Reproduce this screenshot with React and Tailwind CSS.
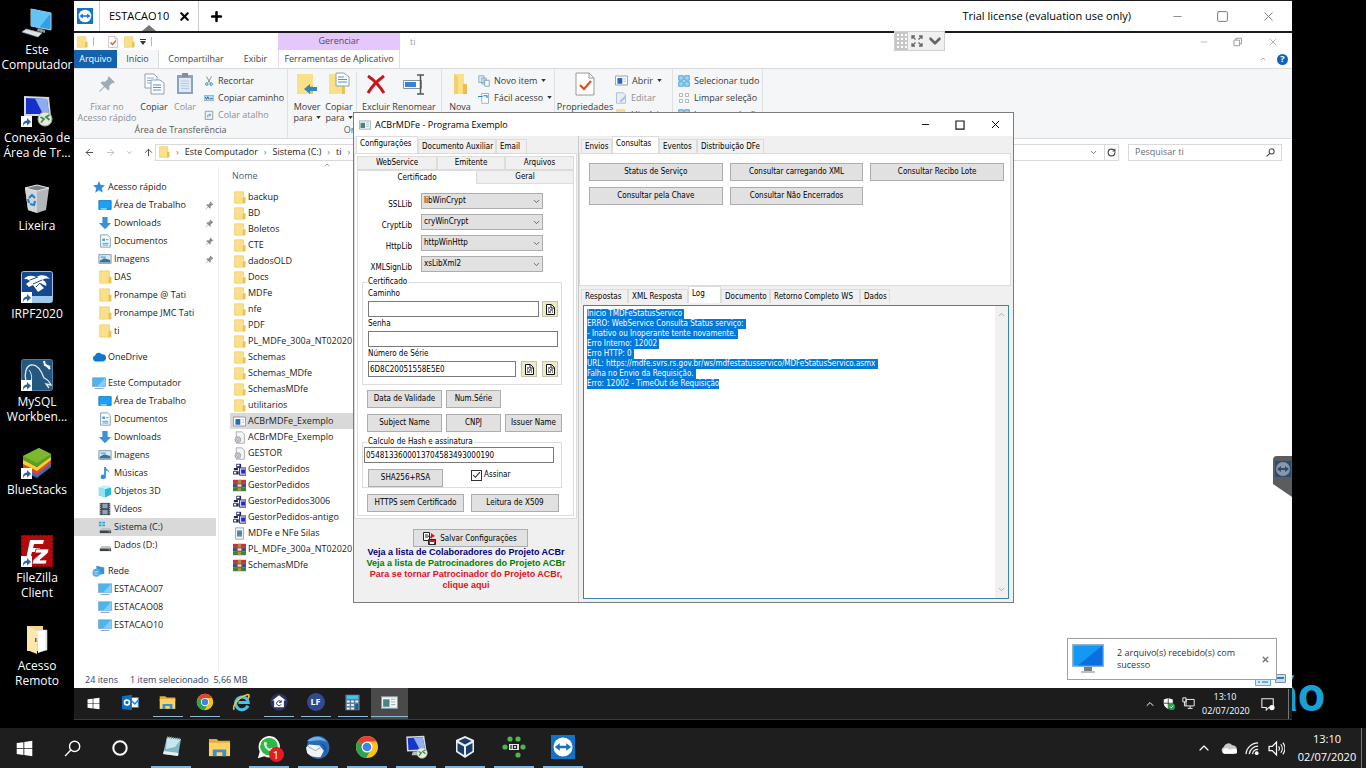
import React, { useEffect, useRef } from 'react';
import { ArrowLeft, ArrowRight, ArrowUp, ChevronDown, ChevronUp, Minus, Plus, RotateCw, Search, Square, X } from 'lucide-react';

const Svg = ({ w = 14, h, box = '0 0 16 16', children }) => (
    <svg width={w} height={h || w} viewBox={box} fill="none" className="shrink-0" aria-hidden="true">
        {children}
    </svg>
);

/* ---------- small icons ---------- */

const FolderIcon = ({ w = 13 }) => (
    <Svg w={w}>
        <path d="M2 1h11v14H2z" fill="#fbe08a" />
        <path d="M12 8h3v7h-3z" fill="#e9c255" />
        <path d="M2 1h11v7h2v7H2z" stroke="#e8c766" strokeWidth=".8" />
    </Svg>
);

const ScreenIcon = ({ w = 14 }) => (
    <Svg w={w}>
        <path d="M.5 2h15v10H.5z" fill="#4cb5ee" stroke="#7d9bb0" strokeWidth=".7" />
        <path d="M15 2v10H6z" fill="#7fd0fa" />
        <path d="M3 13.7h10v1H3z" fill="#7e9cb0" />
    </Svg>
);

const DesktopFolderIcon = () => (
    <Svg>
        <path d="M1 3h14v10H1z" fill="#1aa3f5" stroke="#0b76c4" />
        <path d="M3 12h7v1H3z" fill="#fff" />
    </Svg>
);

const DownloadIcon = () => (
    <Svg><path d="M5 1h6v7h4l-7 7-7-7h4z" fill="#3c8fd9" /></Svg>
);

const DocumentIcon = () => (
    <Svg>
        <path d="M3 1h8l3 3v11H3z" fill="#fff" stroke="#7b93a5" />
        <path d="M5 5h3v3H5zM5 10h7v1H5zM5 12h7v1H5zM9 6h3v1H9z" fill="#4b9dd0" />
    </Svg>
);

const ImageIcon = () => (
    <Svg>
        <path d="M1 3h14v10H1z" fill="#d7ecf9" stroke="#7d93a3" />
        <path d="M2 10l5-3 7 2v3H2z" fill="#3f6f93" />
        <path d="M3 5h6v2H3z" fill="#6ab7e8" />
    </Svg>
);

const MusicIcon = () => (
    <Svg>
        <path d="M7 1h2c0 3 4 3 4 7-1-2-2-2.600-4-3v7a3 2.500 0 1 1-2-2z" fill="#2b91dc" />
    </Svg>
);

const CubeIcon = () => (
    <Svg>
        <path d="M1 4l8-2 6 2v8l-6 3-8-2z" fill="#29b8d6" />
        <path d="M1 4l7 2v9l-7-2z" fill="#8fe5f3" />
        <path d="M1 4l8-2 6 2-7 2z" fill="#c6f3f9" />
    </Svg>
);

const VideoIcon = () => (
    <Svg>
        <path d="M2 1h12v14H2z" fill="#454b52" />
        <path d="M5 2h6v5H5zM5 9h6v5H5z" fill="#8fa5b5" />
        <path d="M3 2v12M13 2v12" stroke="#d5d9dc" strokeDasharray="1 1.500" />
    </Svg>
);

const DriveIcon = ({ system }) => (
    <Svg>
        {system && <path d="M1 2h3v2H1zM5 2h3v2H5zM1 5h3v2H1zM5 5h3v2H5z" fill="#26a5e0" />}
        <path d="M4 9h10l1 3H2z" fill="#bfc4c8" />
        <path d="M2 12h13v3H2z" fill="#3c4145" />
        <path d="M12 13h2v1h-2z" fill="#6fdc8c" />
    </Svg>
);

const StarIcon = () => (
    <Svg w={12}><path d="M8 0l2.300 5.200L16 5.800l-4.300 3.800L13 15.500 8 12.400 3 15.500l1.300-5.900L0 5.800l5.700-.6z" fill="#2f8edb" /></Svg>
);

const CloudIcon = () => (
    <Svg><path d="M4 13a3.500 3.500 0 0 1-.5-6.800 4.500 4.500 0 0 1 8-1.200A4 4 0 0 1 12.500 13z" fill="#0f78d0" /></Svg>
);

const NetworkIcon = () => (
    <Svg>
        <path d="M5 2l9 2v7l-9 2z" fill="#3b93d1" />
        <circle cx="5" cy="10" r="4.500" fill="#4faee4" />
        <path d="M2 9c2 1 3-1 5 0M3 12c2-1 3 0 4 0" stroke="#bfe5fa" />
    </Svg>
);

const PinIcon = ({ w = 9, h, color = '#8b8f94' }) => (
    <Svg w={w} h={h}>
        <path d="M9.500 1l5.500 5.500-1.500.8-.8-.2-2.700 2.700.2 2.700-1.200 1.200-3-3L1.500 15 1 14.500 5.300 10l-3-3 1.200-1.200 2.700.2L9 3.300l-.3-.8z" fill={color} />
    </Svg>
);

const AppIcon = ({ w = 12 }) => (
    <Svg w={w}>
        <path d="M.5 2.500h15v11H.5z" fill="#f5f8fa" stroke="#8b9aa5" />
        <path d="M2 5h6v7H2z" fill="#48857c" />
        <path d="M9.500 5h4M9.500 7.500h4M9.500 10h4" stroke="#a6b2ba" />
    </Svg>
);

const ExeIcon = () => (
    <Svg w={13}>
        <path d="M.5 2.500h15v11H.5z" fill="#fff" stroke="#7c8c9a" />
        <path d="M3 5h6v7H3z" fill="#2867b8" />
        <path d="M10.500 6h3M10.500 9h3" stroke="#9fb2c5" />
    </Svg>
);

const IniIcon = () => (
    <Svg w={13}>
        <path d="M4 1h7l3 3v11H4z" fill="#f4f5f6" stroke="#9ba1a7" />
        <circle cx="6" cy="10.500" r="3.500" fill="#d4d8db" stroke="#8d9398" />
        <circle cx="6" cy="10.500" r="1.200" fill="#fff" stroke="#8d9398" />
    </Svg>
);

const GestorIcon = () => (
    <Svg w={13}>
        <path d="M4 1h6v5H4z" fill="#23255e" />
        <path d="M5 2h3v2H5z" fill="#fff" />
        <path d="M1 6h5v3H1zM0 10h7v4H0z" fill="#23255e" />
        <path d="M1 11h3v2H1z" fill="#fff" />
        <path d="M8 6h8v9H8z" fill="#d8daf0" stroke="#191b66" />
        <path d="M10 8h5v5h-5z" fill="#1c2bd0" />
    </Svg>
);

const RarIcon = () => (
    <Svg w={13}>
        <path d="M0 1h16v5H0z" fill="#c4323b" />
        <path d="M0 6h16v4H0z" fill="#3b4fa0" />
        <path d="M0 10h16v5H0z" fill="#2f8a3f" />
        <path d="M6 1h4v14H6z" fill="#b98b4a" />
        <path d="M5 6h6v4H5z" fill="#efe0b0" stroke="#6b4a1c" />
    </Svg>
);

const PlainFileIcon = () => (
    <Svg w={13}>
        <path d="M3 1h10v14H3z" fill="#e9f1f7" stroke="#8a9fae" />
        <path d="M5 4h6v8H5z" fill="#7ba3bd" />
        <path d="M5 6h6M5 8h6M5 10h6" stroke="#3f6781" />
    </Svg>
);

const TeamViewerIcon = ({ w = 16 }) => (
    <Svg w={w} box="0 0 24 24">
        <path d="M0 0h24v24H0z" fill="#1273c8" />
        <circle cx="12" cy="12" r="9.500" fill="#fff" />
        <path d="M3.800 12l5-3.700v2.400h6.400V8.300l5 3.700-5 3.700v-2.400H8.800v2.400z" fill="#1273c8" />
    </Svg>
);

const ChromeIcon = ({ w }) => (
    <Svg w={w} box="0 0 24 24">
        <circle cx="12" cy="12" r="11" fill="#fbc116" />
        <path d="M12 12L2.500 6.500A11 11 0 0 1 21.500 6.500H12z" fill="#e04336" />
        <path d="M12 12L2.500 6.500A11 11 0 0 0 11 23l5-8.500z" fill="#31a350" />
        <circle cx="12" cy="12" r="5.500" fill="#fff" />
        <circle cx="12" cy="12" r="4.300" fill="#3f83ec" />
    </Svg>
);

const ExplorerIcon = ({ w }) => (
    <Svg w={w} box="0 0 24 24">
        <path d="M1 3h8l2 2h12v5H1z" fill="#e8a93a" />
        <path d="M1 7h22v14H1z" fill="#fcd364" />
        <path d="M5 21v-7h14v7h-4v-4H9v4z" fill="#3b8fd0" />
    </Svg>
);

const WindowsIcon = ({ w }) => (
    <Svg w={w} box="0 0 24 24">
        <path d="M1 4.300l9.500-1.300v8.500H1zM11.700 2.800L23 1.200v10.300H11.700zM1 12.600h9.500V21L1 19.700zM11.700 12.600H23v10.200l-11.300-1.600z" fill="#fff" />
    </Svg>
);

const RemoteDesktopIcon = ({ w }) => (
    <Svg w={w} box="0 0 32 32">
        <path d="M3 2l24-1 3 20-26 1z" fill="#d8dade" />
        <path d="M5 4l20-1 3 16-22 1z" fill="#1736c9" />
        <path d="M13 4l12-1 3 16-7 .4z" fill="#8fb1f0" />
        <path d="M12 22h8l3 5H10z" fill="#b9bcc0" />
        <circle cx="24" cy="24" r="7" fill="#e9ece6" stroke="#a9ada5" />
        <path d="M19.500 22l3.500 2-3 3.500M28.500 20l-3.500 2 3.500 3" stroke="#3e9142" strokeWidth="1.800" />
    </Svg>
);

/* ---------- desktop ---------- */

const Shortcut = () => (
    <g>
        <path d="M0 21h11v11H0z" fill="#fff" />
        <path d="M2 31c0-4 1-5 4-5.500V23l4 4-4 3.500V28c-2 0-3 1-4 3z" fill="#2a62ab" />
    </g>
);

const desktopItems = [
    { label: ['Este', 'Computador'], icon: (
        <>
            <path d="M10 2l20 4v17L10 19z" fill="#2f9fe6" stroke="#b9d5e6" />
            <path d="M10 2l20 4-12 15-8-2z" fill="#63c2f7" />
            <path d="M17 21l7 2v3l-8-2z" fill="#8a949b" />
            <path d="M5 22l16 4-4 4-16-5z" fill="#dfe3e6" stroke="#9aa2a8" strokeWidth=".7" />
        </>
    ) },
    { label: ['Conexão de', 'Área de Tr...'], icon: (
        <>
            <path d="M3 1l25 1 2 19H3z" fill="#d5d8dc" />
            <path d="M5 3l21 1 2 15H5z" fill="#1631c7" />
            <path d="M14 3.500l12 .5 2 15h-6z" fill="#8dadf0" />
            <circle cx="24" cy="24" r="7" fill="#e5e9e2" stroke="#a9ada5" />
            <path d="M19.500 22l3.500 2-3 3.500M28.500 20l-3.500 2 3.500 3" stroke="#3e9142" strokeWidth="1.800" />
            <Shortcut />
        </>
    ) },
    { label: ['Lixeira'], icon: (
        <>
            <path d="M4 5l12-3 12 3-3 22-9 3-9-3z" fill="#b4b7ba" />
            <path d="M4 5l12 3v22l-9-3z" fill="#d3d5d7" />
            <path d="M4 5l12-3 12 3-12 3z" fill="#7d8184" stroke="#e4e6e7" />
            <path d="M8 15l3-3 3 3M14 18l-1 4-4-1M8 20l-1-4" stroke="#1f84d6" strokeWidth="2.200" />
        </>
    ) },
    { label: ['IRPF2020'], icon: (
        <>
            <rect x=".5" y=".5" width="31" height="31" rx="2" fill="#164892" stroke="#9fc3e6" />
            <path d="M1 25h30v6H1z" fill="#9dcbea" />
            <path d="M3 8c3-4 8-4 12-2 5-3 11-2 14 2-4-1-6 0-8 1 4 1 5 4 4 6-3-1-4-3-7-3l5 5-6 4-5-7-4 2-3-3 4-3c-2-2-4-2-6-2z" fill="#fff" />
            <path d="M9 9l8-3M12 13l9-4M15 16l4-4" stroke="#164892" />
            <Shortcut />
        </>
    ) },
    { label: ['MySQL', 'Workben...'], icon: (
        <>
            <rect x=".5" y=".5" width="31" height="31" rx="2" fill="#25587f" stroke="#4c7fa6" />
            <path d="M5 22c-2-7 0-15 5-16 6-1 10 5 13 13 3 1 5 3 7 7l-5-1 3 4" stroke="#dfeaf2" strokeWidth="1.300" />
            <path d="M8 11c3 4 3 8 2 12" stroke="#dfeaf2" />
            <path d="M23 2l1 4 5 2M25 6l4 4" stroke="#fff" strokeWidth="2" />
            <Shortcut />
        </>
    ) },
    { label: ['BlueStacks'], icon: (
        <>
            <path d="M2 18l14 8 14-12v6L16 31 2 24z" fill="#2f6fb8" />
            <path d="M2 15l14 8 14-12v5L16 28 2 20z" fill="#e3432c" />
            <path d="M2 12l14 8L30 8v5L16 24 2 17z" fill="#f6cf33" />
            <path d="M2 9L18 1l12 6v3L16 20 2 13z" fill="#5f9d25" />
            <path d="M2 9L18 1l12 6-14 9z" fill="#7cb82f" />
            <Shortcut />
        </>
    ) },
    { label: ['FileZilla', 'Client'], icon: (
        <>
            <rect width="32" height="32" fill="#b3090c" />
            <rect x=".5" y=".5" width="31" height="31" stroke="#5c0305" strokeDasharray="2 2" />
            <path d="M9 5h14l-1 4h-9l-1 4h7l-1 4h-7l-2 7H5z" fill="#fff" />
            <path d="M15 14h13l-1 4-8 7h7l-1 4H11l1-4 8-7h-6z" fill="#fff" stroke="#b3090c" strokeWidth=".8" />
            <Shortcut />
        </>
    ) },
    { label: ['Acesso', 'Remoto'], icon: (
        <>
            <path d="M6 3h16v25H6z" fill="#f6d786" />
            <path d="M15 7h11v20l-8 2z" fill="#eef0f1" stroke="#c8cbcd" strokeWidth=".6" />
            <path d="M6 3l10 5v23L6 27z" fill="#fbe7ae" />
            <path d="M17 9l7-2v20l-7 3z" fill="#fff" />
            <path d="M14 15h1.500v4H14z" fill="#b4494a" />
        </>
    ) },
];

const DesktopIcons = () => (
    <aside className="flex w-[74px] shrink-0 flex-col pt-[7px]">
        {desktopItems.map((item) => (
            <a key={item.label[0]} href="#" className="flex h-[88px] flex-col items-center gap-[3px] text-center text-[12px] leading-[15px] text-white">
                <Svg w={32} box="0 0 32 32">{item.icon}</Svg>
                <span>
                    {item.label.map((line) => <span key={line} className="block whitespace-nowrap">{line}</span>)}
                </span>
            </a>
        ))}
    </aside>
);

/* ---------- explorer ---------- */

const Caret = () => (
    <Svg w={5} h={3} box="0 0 6 4"><path d="M0 0h6L3 4z" fill="#333" /></Svg>
);

const RibbonBig = ({ label, more, caret, muted, icon, width }) => (
    <button className={`flex flex-col items-center leading-[11px] ${width} ${muted ? 'text-[#8d9094]' : 'text-[#3b3b3b]'}`}>
        {icon}
        <span className="mt-[5px] whitespace-nowrap">{label}</span>
        {more && <span className="flex items-center gap-[3px] whitespace-nowrap">{more}{caret && <Caret />}</span>}
    </button>
);

const RibbonRow = ({ icon, label, caret, muted }) => (
    <button className={`flex h-[17px] items-center gap-1 whitespace-nowrap ${muted ? 'text-[#8d9094]' : 'text-[#3b3b3b]'}`}>
        {icon}
        <span>{label}</span>
        {caret && <Caret />}
    </button>
);

const RibbonGroup = ({ title, width, children }) => (
    <div className={`flex shrink-0 flex-col justify-between border-r border-[#e0e1e2] ${width}`}>
        <div className="flex items-start pt-[3px]">{children}</div>
        <div className="h-[14px] text-center leading-[12px] text-[#5a5a5a]">{title}</div>
    </div>
);

const PropertyIcon = ({ w = 12, h }) => (
    <Svg w={w} h={h} box="0 0 20 24">
        <path d="M1 1h13l5 5v17H1z" fill="#fff" stroke="#9a9a9a" />
        <path d="M14 1v5h5" stroke="#9a9a9a" />
        <path d="M5 13l4 4 7-8" stroke="#d9552b" strokeWidth="2.400" />
    </Svg>
);

const TitleBar = () => (
    <div className="flex h-[17px] items-stretch">
        <div className="flex w-[204px] items-center gap-[5px] pl-[2px]">
            <FolderIcon w={12} />
            <span className="h-[9px] w-px bg-[#b5b5b5]"></span>
            <span className="w-1"></span>
            <PropertyIcon w={10} h={12} />
            <FolderIcon w={12} />
            <Svg w={6} h={6} box="0 0 6 6"><path d="M0 0h6v1H0zM0 2h6L3 6z" fill="#333" /></Svg>
            <span className="h-[9px] w-px bg-[#b5b5b5]"></span>
        </div>
        <div className="w-[122px] bg-[#e5c8fb] text-center leading-[16px] text-[#57466a]">Gerenciar</div>
        <div className="flex-1 pl-[10px] leading-[17px] text-[#999]">ti</div>
        <div className="flex items-center gap-6 pr-[13px] text-[#999]">
            <Minus size={10} strokeWidth={1.5} />
            <Svg w={10}><path d="M1.500 5h9v9h-9zM4.500 5V2h9v9h-3" stroke="#888" strokeWidth="1.300" /></Svg>
            <X size={12} strokeWidth={1.5} />
        </div>
    </div>
);

const RibbonTabs = () => (
    <nav className="flex h-[18px] items-center whitespace-nowrap text-[#444]">
        <a href="#" className="h-full w-[43px] bg-[#1461ad] text-center leading-[18px] text-white">Arquivo</a>
        <a href="#" className="h-full w-[42px] border-r border-[#dadbdc] bg-[#f5f6f7] text-center leading-[18px]">Início</a>
        <a href="#" className="w-[74px] text-center">Compartilhar</a>
        <a href="#" className="w-[45px] text-center">Exibir</a>
        <a href="#" className="h-full w-[122px] border-x border-[#ead9f6] text-center leading-[18px]">Ferramentas de Aplicativo</a>
        <div className="flex flex-1 items-center justify-end gap-[10px] pr-1">
            <ChevronUp size={8} color="#888" />
            <span className="flex h-[11px] w-[11px] items-center justify-center rounded-full bg-[#0f64b5] text-[9px] font-bold text-white">?</span>
        </div>
    </nav>
);

const Ribbon = () => (
    <div className="flex h-[71px] border-y border-[#dadbdc] bg-[#f5f6f7]">
        <RibbonGroup title="Área de Transferência" width="w-[214px]">
            <RibbonBig width="w-[66px]" muted label="Fixar no" more="Acesso rápido" icon={<PinIcon w={18} h={24} color="#9eacb9" />} />
            <RibbonBig width="w-[28px]" label="Copiar" icon={
                <Svg w={22} h={24} box="0 0 22 24">
                    <path d="M2 2h9l3 3v11H2z" fill="#fff" stroke="#8aa0b2" />
                    <path d="M4 6h7M4 8.500h7M4 11h5" stroke="#7fb0da" />
                    <path d="M8 8h9l4 3v11H8z" fill="#fff" stroke="#8aa0b2" />
                    <path d="M10 13h8M10 15.500h8M10 18h8" stroke="#4f93cd" />
                </Svg>
            } />
            <RibbonBig width="w-[34px]" muted label="Colar" icon={
                <Svg w={20} h={24} box="0 0 20 24">
                    <path d="M2 3h16v19H2z" fill="#8ca3bd" />
                    <path d="M4 6h12v14H4z" fill="#dfe9f3" />
                    <path d="M6 9h8M6 11.500h8M6 14h8M6 16.500h8" stroke="#b6cbe0" />
                    <path d="M7 1h6v4H7z" fill="#7f8fa2" />
                </Svg>
            } />
            <div className="flex flex-col pl-[2px]">
                <RibbonRow label="Recortar" icon={
                    <Svg w={10}>
                        <path d="M4 1l6 10M12 1L6 11" stroke="#7b8ea0" strokeWidth="1.500" />
                        <circle cx="4.500" cy="13" r="2" stroke="#2a7fc4" strokeWidth="1.500" />
                        <circle cx="11.500" cy="13" r="2" stroke="#2a7fc4" strokeWidth="1.500" />
                    </Svg>
                } />
                <RibbonRow label="Copiar caminho" icon={
                    <Svg w={10}>
                        <path d="M0 4h16v8H0z" fill="#b6dbf2" stroke="#6f9fbe" />
                        <path d="M2 6l2 4 2-4 2 4M10 9h4" stroke="#1b4f7c" strokeWidth="1.300" />
                    </Svg>
                } />
                <RibbonRow muted label="Colar atalho" icon={
                    <Svg w={10}>
                        <path d="M2 2h12v13H2z" fill="#edf2f7" stroke="#8b9bae" strokeWidth="1.500" />
                        <path d="M6 12V8h4M8 6l3 2-3 2" stroke="#6f8fb3" strokeWidth="1.300" />
                    </Svg>
                } />
            </div>
        </RibbonGroup>
        <RibbonGroup title="Organizar" width="w-[154px]">
            <RibbonBig width="w-[38px]" label="Mover" more="para" caret icon={
                <Svg w={22} h={24} box="0 0 22 24">
                    <path d="M1 2h16v20H1z" fill="#fbe08a" />
                    <path d="M14 14h3v8h-3z" fill="#e9c255" />
                    <path d="M8 17l6-5v3h7v4h-7v3z" fill="#2f86c9" />
                </Svg>
            } />
            <RibbonBig width="w-[26px]" label="Copiar" more="para" caret icon={
                <Svg w={22} h={24} box="0 0 22 24">
                    <path d="M1 2h16v20H1z" fill="#fbe08a" />
                    <path d="M14 14h3v8h-3z" fill="#e9c255" />
                    <path d="M8 1h8l5 4v9H8z" fill="#fff" stroke="#8aa0b2" />
                    <path d="M10 5h6M10 7.500h9M10 10h9" stroke="#4f93cd" />
                </Svg>
            } />
            <span className="mx-1 h-[52px] w-px bg-[#e0e1e2]"></span>
            <RibbonBig width="w-[30px]" label="Excluir" icon={
                <Svg w={20} h={24} box="0 0 20 24">
                    <path d="M2 4c6 4 11 9 16 17M18 4C11 9 6 14 2 21" stroke="#cb1420" strokeWidth="3" />
                </Svg>
            } />
            <RibbonBig width="w-[46px]" label="Renomear" icon={
                <Svg w={22} h={24} box="0 0 22 24">
                    <path d="M.5 8.500h18v8H.5z" fill="#fff" stroke="#8a9299" />
                    <path d="M2 10h11v5H2z" fill="#2f86d2" />
                    <path d="M14 3h7M14 22h7M17.500 3v19" stroke="#555" strokeWidth="1.500" />
                </Svg>
            } />
        </RibbonGroup>
        <RibbonGroup title="" width="w-[113px]">
            <RibbonBig width="w-[36px]" label="Nova" icon={
                <Svg w={18} h={24} box="0 0 18 24">
                    <path d="M3 2h10v20H3z" fill="#fbdf89" />
                    <path d="M12 12h4v10h-4z" fill="#e7bf4f" />
                    <path d="M3 2l4 3v17H3z" fill="#f3d06c" />
                </Svg>
            } />
            <div className="flex flex-col">
                <RibbonRow label="Novo item" caret icon={
                    <Svg w={12}>
                        <path d="M1 1h7v9H1zM5 4h6v8H5z" fill="#dbeaf6" stroke="#7a9dbb" />
                        <path d="M9 7h6v8H9z" fill="#fff" stroke="#5f8aae" />
                    </Svg>
                } />
                <RibbonRow label="Fácil acesso" caret icon={
                    <Svg w={12}>
                        <path d="M5 2h9v13H5z" fill="#fff" stroke="#7a9dbb" />
                        <path d="M0 6h6M7 5h5v3" stroke="#2a7fc4" strokeWidth="1.600" />
                    </Svg>
                } />
            </div>
        </RibbonGroup>
        <RibbonGroup title="" width="w-[118px]">
            <RibbonBig width="w-[60px]" label="Propriedades" icon={<PropertyIcon w={20} h={24} />} />
            <div className="flex flex-col">
                <RibbonRow label="Abrir" caret icon={<ExeIcon />} />
                <RibbonRow muted label="Editar" icon={
                    <Svg w={12}>
                        <path d="M2 1h9l3 3v11H2z" fill="#e6eff7" stroke="#9bb2c7" />
                        <path d="M6 12l7-7 2 2-7 7z" fill="#a9c3dc" />
                    </Svg>
                } />
                <RibbonRow label="Histórico" icon={<FolderIcon w={12} />} />
            </div>
        </RibbonGroup>
        <RibbonGroup title="" width="w-[90px]">
            <div className="flex flex-col pl-[5px]">
                <RibbonRow label="Selecionar tudo" icon={
                    <Svg w={12}><path d="M1 1h6v6H1zM9 1h6v6H9zM1 9h6v6H1zM9 9h6v6H9z" fill="#9fd6f7" stroke="#2b8fce" /></Svg>
                } />
                <RibbonRow label="Limpar seleção" icon={
                    <Svg w={12}><path d="M2 2h4v4H2zM10 2h4v4h-4zM2 10h4v4H2zM10 10h4v4h-4z" fill="#fff" stroke="#9aa1a8" /></Svg>
                } />
                <RibbonRow label="Inverter seleção" icon={
                    <Svg w={12}><path d="M1 1h6v6H1zM9 1h6v6H9zM1 9h6v6H1z" fill="#9fd6f7" stroke="#2b8fce" /></Svg>
                } />
            </div>
        </RibbonGroup>
    </div>
);

const AddressBar = () => (
    <div className="flex h-[26px] items-center px-[10px]">
        <div className="flex w-[71px] items-center gap-[10px]">
            <ArrowLeft size={11} color="#444" />
            <ArrowRight size={11} color="#c0c0c0" />
            <ChevronDown size={7} color="#777" />
            <ArrowUp size={11} color="#444" />
        </div>
        <div className="flex h-[17px] flex-1 items-center gap-[6px] border border-[#d9d9d9] pl-[2px] text-[#222]">
            <FolderIcon w={12} />
            <span className="text-[#777]">›</span>
            <a href="#">Este Computador</a>
            <span className="text-[#777]">›</span>
            <a href="#">Sistema (C:)</a>
            <span className="text-[#777]">›</span>
            <a href="#">ti</a>
            <span className="text-[#777]">›</span>
            <span className="flex-1"></span>
            <ChevronDown size={9} color="#444" />
            <span className="flex h-full items-center border-l border-[#d9d9d9] px-[2px]"><RotateCw size={9} color="#444" strokeWidth={3} /></span>
        </div>
        <label className="ml-[9px] flex h-[17px] w-[154px] items-center border border-[#d9d9d9] px-[6px]">
            <input type="search" placeholder="Pesquisar ti" aria-label="Pesquisar ti" className="min-w-0 flex-1 outline-none placeholder:text-[#6d6d6d]" />
            <Svg w={9}>
                <circle cx="10" cy="6" r="4.500" stroke="#444" strokeWidth="1.800" />
                <path d="M7 9.500L1 15" stroke="#444" strokeWidth="2" />
            </Svg>
        </label>
    </div>
);

const navGroups = [
    [
        ['Acesso rápido', <StarIcon />, 'root'],
        ['Área de Trabalho', <DesktopFolderIcon />, 'pin'],
        ['Downloads', <DownloadIcon />, 'pin'],
        ['Documentos', <DocumentIcon />, 'pin'],
        ['Imagens', <ImageIcon />, 'pin'],
        ['DAS', <FolderIcon w={14} />],
        ['Pronampe @ Tati', <FolderIcon w={14} />],
        ['Pronampe JMC Tati', <FolderIcon w={14} />],
        ['ti', <FolderIcon w={14} />],
    ],
    [['OneDrive', <CloudIcon />, 'root']],
    [
        ['Este Computador', <ScreenIcon />, 'root'],
        ['Área de Trabalho', <DesktopFolderIcon />],
        ['Documentos', <DocumentIcon />],
        ['Downloads', <DownloadIcon />],
        ['Imagens', <ImageIcon />],
        ['Músicas', <MusicIcon />],
        ['Objetos 3D', <CubeIcon />],
        ['Vídeos', <VideoIcon />],
        ['Sistema (C:)', <DriveIcon system />, 'selected'],
        ['Dados (D:)', <DriveIcon />],
    ],
    [
        ['Rede', <NetworkIcon />, 'root'],
        ['ESTACAO07', <ScreenIcon />],
        ['ESTACAO08', <ScreenIcon />],
        ['ESTACAO10', <ScreenIcon />],
    ],
];

const NavTree = () => (
    <nav className="flex w-[145px] shrink-0 flex-col gap-2 border-r border-[#f0f0f0] pt-[12px] pr-[2px]">
        {navGroups.map((group, g) => (
            <ul key={g}>
                {group.map(([label, icon, kind]) => (
                    <li key={label}>
                        <a href="#" className={`flex h-[18px] items-center gap-[2px] pr-[2px] whitespace-nowrap ${kind === 'root' ? 'pl-[18px]' : 'pl-[24px]'} ${kind === 'selected' ? 'bg-[#d9d9d9]' : ''}`}>
                            <span className="flex w-[14px] justify-center">{icon}</span>
                            <span className="flex-1">{label}</span>
                            {kind === 'pin' && <PinIcon />}
                        </a>
                    </li>
                ))}
            </ul>
        ))}
    </nav>
);

const files = [
    ['backup', 'folder'], ['BD', 'folder'], ['Boletos', 'folder'], ['CTE', 'folder'],
    ['dadosOLD', 'folder'], ['Docs', 'folder'], ['MDFe', 'folder'], ['nfe', 'folder'],
    ['PDF', 'folder'], ['PL_MDFe_300a_NT02020 N', 'folder'], ['Schemas', 'folder'],
    ['Schemas_MDfe', 'folder'], ['SchemasMDfe', 'folder'], ['utilitarios', 'folder'],
    ['ACBrMDFe_Exemplo', 'exe'], ['ACBrMDFe_Exemplo', 'ini'], ['GESTOR', 'ini'],
    ['GestorPedidos', 'gestor'], ['GestorPedidos', 'rar'], ['GestorPedidos3006', 'gestor'],
    ['GestorPedidos-antigo', 'gestor'], ['MDFe e NFe Silas', 'file'],
    ['PL_MDFe_300a_NT02020 N', 'rar'], ['SchemasMDfe', 'rar'],
];

const fileIcons = {
    folder: <FolderIcon />,
    exe: <ExeIcon />,
    ini: <IniIcon />,
    gestor: <GestorIcon />,
    rar: <RarIcon />,
    file: <PlainFileIcon />,
};

const FileList = () => (
    <div className="min-w-0 flex-1 pl-[11px]">
        <div className="flex h-[23px] pt-[3px] pl-[2px]">
            <span className="w-[91px] text-[#4c607a]">Nome</span>
            <ChevronUp size={8} color="#777" className="-mt-2" />
        </div>
        <ul className="w-[200px]">
            {files.map(([name, type], idx) => (
                <li key={idx} className={`flex h-4 items-center gap-[2px] pl-[3px] whitespace-nowrap ${type === 'exe' ? 'bg-[#d9d9d9]' : ''}`}>
                    {fileIcons[type]}
                    <span>{name}</span>
                </li>
            ))}
        </ul>
    </div>
);

const Explorer = () => (
    <section className="flex flex-1 flex-col bg-white text-[9px] text-[#222]">
        <TitleBar />
        <RibbonTabs />
        <Ribbon />
        <AddressBar />
        <div className="flex flex-1 pt-[1px]">
            <NavTree />
            <FileList />
        </div>
        <footer className="flex h-[17px] items-center gap-3 pr-[6px] pl-[11px] text-[#2b3f6b]">
            <span>24 itens</span>
            <span>1 item selecionado&nbsp; 5,66 MB</span>
            <div className="flex flex-1 justify-end gap-1">
                <Svg w={16} h={12} box="0 0 16 12">
                    <path d="M.5.500h15v11H.5z" fill="#d3ecfa" stroke="#5bb0dd" />
                    <path d="M3 5h2M7 5h6M3 8h2M7 8h6" stroke="#33607c" />
                </Svg>
                <Svg w={11} h={9} box="0 0 11 9">
                    <path d="M.5.500h10v8H.5z" fill="#bfe1f5" stroke="#8193a0" />
                    <path d="M2 3h7v2H2z" fill="#3c7eaa" />
                </Svg>
            </div>
        </footer>
    </section>
);

/* ---------- ACBr program window ---------- */

const DlgButton = ({ children, className = '' }) => (
    <button className={`flex h-[18px] items-center justify-center gap-1 border border-[#adadad] bg-[#e1e1e1] whitespace-nowrap ${className}`}>{children}</button>
);

const Tabs = ({ items, active }) => (
    <div role="tablist" className="flex h-[17px] items-end pl-[2px]">
        {items.map(([label, width]) => (
            <button
                key={label}
                role="tab"
                aria-selected={label === active}
                className={`border border-b-0 border-[#dcdcdc] pl-[3px] text-left whitespace-nowrap ${width} ${label === active ? 'h-[17px] bg-white pb-[2px]' : 'h-[14px] bg-[#f0f0f0]'}`}
            >
                {label}
            </button>
        ))}
    </div>
);

const FileGlyph = () => (
    <Svg w={9} h={11} box="0 0 9 11">
        <path d="M.5.500h5l3 3v7h-8z" fill="#fff" stroke="#111" />
        <path d="M2 4h2M2 6h1M4 6h3M2 8h3M6 8h1M5 1v3h3" stroke="#111" />
    </Svg>
);

const BrowseButton = ({ label }) => (
    <button aria-label={label} className="flex h-4 w-4 shrink-0 items-center justify-center border border-[#c3c3a8] bg-[#ecebc6]">
        <FileGlyph />
    </button>
);

const libs = [
    ['SSLLib', 'libWinCrypt'],
    ['CryptLib', 'cryWinCrypt'],
    ['HttpLib', 'httpWinHttp'],
    ['XMLSignLib', 'xsLibXml2'],
];

const inputClass = 'h-4 min-w-0 flex-1 border border-[#7a7a7a] bg-white px-[1px] outline-none';

const CertificateForm = () => (
    <form className="border border-t-0 border-[#dcdcdc] bg-white pt-[9px] pr-[11px] pb-[3px] pl-1" onSubmit={(e) => e.preventDefault()}>
        <div className="flex flex-col gap-[5px]">
            {libs.map(([label, value]) => (
                <div key={label} className="flex items-end gap-[9px]">
                    <label htmlFor={label} className="-mb-[2px] w-[50px] text-right leading-[12px]">{label}</label>
                    <div className="relative w-[122px]">
                        <select id={label} defaultValue={value} className="block h-4 w-full appearance-none border border-[#adadad] bg-[#e1e1e1] px-[2px] outline-none">
                            <option>{value}</option>
                        </select>
                        <ChevronDown size={9} color="#444" className="pointer-events-none absolute top-1 right-[2px]" />
                    </div>
                </div>
            ))}
        </div>
        <fieldset className="mt-[5px] border border-[#dcdcdc] pt-[2px] pr-[3px] pb-[7px] pl-[5px]">
            <legend className="-ml-[1px] px-[1px] leading-[10px]">Certificado</legend>
            <div className="flex flex-col gap-[2px]">
                <label htmlFor="caminho" className="leading-[10px]">Caminho</label>
                <div className="flex gap-[3px]">
                    <input id="caminho" className={inputClass} />
                    <BrowseButton label="Procurar certificado" />
                </div>
                <label htmlFor="senha" className="leading-[10px]">Senha</label>
                <div className="flex"><input id="senha" type="password" className={inputClass} /></div>
                <label htmlFor="serie" className="leading-[10px]">Número de Série</label>
                <div className="flex gap-[5px]">
                    <input id="serie" defaultValue="6D8C20051558E5E0" className={inputClass} />
                    <BrowseButton label="Obter número de série" />
                    <BrowseButton label="Selecionar certificado" />
                </div>
            </div>
        </fieldset>
        <div className="mt-[5px] flex flex-col gap-[6px] pl-[5px]">
            <div className="flex gap-1">
                <DlgButton className="w-[75px]">Data de Validade</DlgButton>
                <DlgButton className="w-[55px]">Num.Série</DlgButton>
            </div>
            <div className="flex gap-1">
                <DlgButton className="w-[75px]">Subject Name</DlgButton>
                <DlgButton className="w-[55px]">CNPJ</DlgButton>
                <DlgButton className="w-[57px]">Issuer Name</DlgButton>
            </div>
        </div>
        <fieldset className="mt-[5px] border border-[#dcdcdc] pr-[7px] pl-[1px]">
            <legend className="ml-[3px] px-[1px] leading-[10px]">Calculo de Hash e assinatura</legend>
            <div className="flex"><input aria-label="Calculo de Hash e assinatura" defaultValue="0548133600013704583493000190" className={inputClass} /></div>
            <div className="flex items-start gap-7 pt-[6px] pl-1">
                <DlgButton className="w-[75px]">SHA256+RSA</DlgButton>
                <label className="relative flex items-center gap-[2px]">
                    <input type="checkbox" defaultChecked className="h-[11px] w-[11px] appearance-none border border-[#333] bg-white" />
                    <span className="pointer-events-none absolute top-[1px] left-[1px]">
                        <Svg w={9} h={10}><path d="M2 8l4 4 8-9" stroke="#222" strokeWidth="1.800" /></Svg>
                    </span>
                    Assinar
                </label>
            </div>
        </fieldset>
        <div className="mt-[6px] flex gap-[7px] pl-[5px]">
            <DlgButton className="w-[97px]">HTTPS sem Certificado</DlgButton>
            <DlgButton className="w-[88px]">Leitura de X509</DlgButton>
        </div>
    </form>
);

const SubTab = ({ label, width, active }) => (
    <button role="tab" aria-selected={!!active} className={`border border-[#dcdcdc] ${width} ${active ? 'border-r-0 border-b-0 bg-white' : 'bg-[#f0f0f0]'}`}>{label}</button>
);

const ConfigPane = () => (
    <div className="flex w-[224px] shrink-0 flex-col">
        <Tabs active="Configurações" items={[['Configurações', 'w-[62px]'], ['Documento Auxiliar', 'w-[78px]'], ['Email', 'w-[31px]']]} />
        <div className="mr-[1px] border border-[#dcdcdc] bg-white p-[2px]">
            <div role="tablist" className="leading-[12px]">
                <div className="flex h-[14px]">
                    <SubTab label="WebService" width="w-[80px]" />
                    <SubTab label="Emitente" width="w-[68px]" />
                    <SubTab label="Arquivos" width="flex-1" />
                </div>
                <div className="flex h-[14px]">
                    <SubTab label="Certificado" width="w-[119px]" active />
                    <SubTab label="Geral" width="flex-1" />
                </div>
            </div>
            <CertificateForm />
        </div>
        <div className="flex flex-col items-center pt-[10px] font-['Liberation_Sans'] text-[9px] leading-[11px] font-bold">
            <DlgButton className="ml-2 w-[115px] font-['DejaVu_Sans_Condensed'] text-[8px] font-normal">
                <Svg w={13} box="0 0 13 13">
                    <path d="M.5.500h6v8h-6z" fill="#fff" stroke="#222" />
                    <path d="M2 3h3M2 5h3M5 4l4 2" stroke="#222" />
                    <path d="M8 1l4 3-4 2z" fill="#d11" />
                    <path d="M5.500 7.500h7v5h-7z" fill="#c22" stroke="#222" />
                    <path d="M7 10h4v2H7z" fill="#fff" />
                </Svg>
                Salvar Configurações
            </DlgButton>
            <a href="#" className="whitespace-nowrap text-[#000080]">Veja a lista de Colaboradores do Projeto ACBr</a>
            <a href="#" className="whitespace-nowrap text-[#008000]">Veja a lista de Patrocinadores do Projeto ACBr</a>
            <a href="#" className="text-center text-[#e01020]">Para se tornar Patrocinador do Projeto ACBr,<br />clique aqui</a>
        </div>
    </div>
);

const logText = [
    'Inicio TMDFeStatusServico',
    'ERRO: WebService Consulta Status serviço:',
    '- Inativo ou Inoperante tente novamente.',
    'Erro Interno: 12002',
    'Erro HTTP: 0',
    'URL: https://mdfe.svrs.rs.gov.br/ws/mdfestatusservico/MDFeStatusServico.asmx',
    'Falha no Envio da Requisição.',
    'Erro: 12002 - TimeOut de Requisição',
].join('\n');

const LogBox = () => {
    const ref = useRef(null);

    useEffect(() => {
        ref.current.focus();
        ref.current.select();
    }, []);

    return (
        <div className="mx-1 mt-[2px] mb-[3px] flex flex-1 border border-[#3787ab] bg-white">
            <textarea
                ref={ref}
                readOnly
                aria-label="Log"
                value={logText}
                className="flex-1 resize-none overflow-hidden px-[3px] pt-[3px] leading-[10px] outline-none selection:bg-[#0078d7]/99 selection:text-white"
            />
            <div className="flex w-[13px] flex-col items-center justify-between bg-[#f0f0f0] py-1">
                <ChevronUp size={9} color="#999" />
                <ChevronDown size={9} color="#999" />
            </div>
        </div>
    );
};

const RequestPane = () => (
    <div className="flex flex-1 flex-col border-l border-[#c8c8c8]">
        <Tabs active="Consultas" items={[['Envios', 'w-[31px]'], ['Consultas', 'w-[47px]'], ['Eventos', 'w-[38px]'], ['Distribuição DFe', 'w-[67px]']]} />
        <div className="mr-[2px] grid h-[133px] grid-cols-3 content-start gap-x-[7px] gap-y-[6px] border border-[#dcdcdc] bg-white pt-[9px] pr-[6px] pl-[9px]">
            <DlgButton>Status de Serviço</DlgButton>
            <DlgButton>Consultar carregando XML</DlgButton>
            <DlgButton>Consultar Recibo Lote</DlgButton>
            <DlgButton>Consultar pela Chave</DlgButton>
            <DlgButton>Consultar Não Encerrados</DlgButton>
        </div>
        <Tabs active="Log" items={[['Respostas', 'w-[47px]'], ['XML Resposta', 'w-[60px]'], ['Log', 'w-[33px]'], ['Documento', 'w-[49px]'], ['Retorno Completo WS', 'w-[90px]'], ['Dados', 'w-[30px]']]} />
        <LogBox />
    </div>
);

const AcbrWindow = () => (
    <section className="absolute top-[79px] left-[279px] flex h-[491px] w-[661px] flex-col border border-[#7c7c7c] bg-[#f0f0f0] font-['DejaVu_Sans_Condensed'] text-[8px] text-black">
        <header className="flex h-[23px] items-center gap-1 bg-white pr-[11px] pl-[5px] font-['Open_Sans'] text-[9px]">
            <AppIcon w={12} />
            <h1 className="flex-1">ACBrMDFe - Programa Exemplo</h1>
            <div className="flex items-center gap-6">
                <Minus size={11} strokeWidth={2} />
                <Svg w={10}><path d="M1.500 1.500h13v13h-13z" stroke="#111" strokeWidth="1.800" /></Svg>
                <X size={13} strokeWidth={1.8} />
            </div>
        </header>
        <div className="flex flex-1">
            <ConfigPane />
            <RequestPane />
        </div>
    </section>
);

/* ---------- remote session chrome ---------- */

const SessionBar = () => (
    <header className="flex h-[33px] shrink-0 items-center border-t border-b-2 border-[#1b1b1f] bg-white text-[11px] text-black">
        <div className="flex h-full w-[26px] items-center border-r border-[#ccc] pl-[3px]"><TeamViewerIcon w={16} /></div>
        <div className="relative flex h-full w-[99px] items-center justify-between border-r border-[#ccc] pr-[7px] pl-[9px]">
            <span>ESTACAO10</span>
            <X size={13} strokeWidth={4} />
            <span className="absolute bottom-0 left-[42px] h-0 w-0 border-x-[7px] border-b-[6px] border-x-transparent border-b-[#777]"></span>
        </div>
        <Plus size={15} strokeWidth={4} className="ml-[10px]" />
        <span className="flex-1 pr-[40px] text-right">Trial license (evaluation use only)</span>
        <div className="flex items-center gap-8 pr-4 text-[#777]">
            <Minus size={13} strokeWidth={1.5} />
            <Square size={13} strokeWidth={1.8} />
            <X size={15} strokeWidth={1.5} />
        </div>
    </header>
);

const FloatingTools = () => (
    <div className="absolute -top-[2px] left-[820px] flex h-[20px] w-[51px] items-center border border-[#cfcfcf] bg-[#f0f0f0]">
        <Svg w={13} h={18} box="0 0 13 18">
            <path d="M0 0h13v18H0z" fill="#c8c8c8" />
            <path d="M2 3h10M2 7h10M2 11h10M2 15h10" stroke="#fff" strokeWidth="2" strokeDasharray="2 2" />
        </Svg>
        <Svg w={18} h={12} box="-3 0 18 12">
            <path d="M1 4V1h3M8 1h3v3M11 8v3H8M4 11H1V8M1 1l3.500 3.500M11 1L7.500 4.500M11 11L7.500 7.500M1 11l3.500-3.500" stroke="#666" strokeWidth="1.300" />
        </Svg>
        <ChevronDown size={18} color="#666" strokeWidth={3.500} />
    </div>
);

const Toast = () => (
    <div role="status" className="absolute right-[15px] bottom-[40px] flex h-[42px] w-[210px] items-center border border-[#a0a0a0] bg-white pr-[6px] pl-1 text-[9px] leading-[12px] text-[#333]">
        <Svg w={32} h={30} box="0 0 32 30">
            <path d="M0 0h32v23H0z" fill="#8fb3cf" />
            <path d="M1.500 1.500h29v20h-29z" fill="#1199f3" />
            <path d="M30.500 1.500v20H6z" fill="#0a6fe0" />
            <path d="M12 23h8v4h-8z" fill="#777e84" />
            <path d="M9 27h14v2H9z" fill="#b9bfc4" />
        </Svg>
        <p className="flex-1 pl-[13px]">2 arquivo(s) recebido(s) com<br />sucesso</p>
        <X size={9} strokeWidth={4} color="#777" />
    </div>
);

const remoteApps = [
    { key: 'outlook', icon: (
        <Svg w={17} box="0 0 24 24">
            <path d="M12 5h11v14H12z" fill="#fff" stroke="#2a80cc" strokeWidth="1.500" />
            <path d="M14 10l4 4 5-5" stroke="#2a80cc" strokeWidth="2" />
            <path d="M0 3l14-2v22L0 21z" fill="#0f6fc0" />
            <circle cx="7" cy="12" r="3.500" stroke="#fff" strokeWidth="2.200" />
        </Svg>
    ) },
    { key: 'explorer', icon: <ExplorerIcon w={17} />, open: true },
    { key: 'chrome', icon: <ChromeIcon w={18} />, open: true },
    { key: 'ie', icon: (
        <Svg w={19} box="0 0 24 24">
            <path d="M20 16a8 8 0 1 1 .5-4H8" stroke="#45c1f0" strokeWidth="3.800" />
            <path d="M3 21C-1 18 8 5 20 2c3 0 1 4 0 5" stroke="#f3c52f" strokeWidth="2" />
        </Svg>
    ) },
    { key: 'home', open: true, icon: (
        <Svg w={18} box="0 0 24 24">
            <circle cx="12" cy="12" r="11.500" fill="#2b3563" />
            <path d="M12 3l9 7h-2.500v9h-13v-9H3z" fill="#fff" />
            <path d="M14.500 11.500a3.200 3.200 0 1 0 .5 3.500M15 9.500v3h-3" stroke="#2b3563" strokeWidth="1.300" />
        </Svg>
    ) },
    { key: 'lf', open: true, icon: (
        <span className="flex h-[18px] w-[18px] items-center justify-center rounded-full bg-[#2f4a8f] text-[9px] font-bold text-white">LF</span>
    ) },
    { key: 'calc', open: true, icon: (
        <Svg w={17} box="0 0 24 24">
            <path d="M2 1h20v22H2z" fill="#5f7f99" />
            <path d="M4 2h16v5H4z" fill="#46c3ea" />
            <path d="M4 9h4v3H4zM10 9h4v3h-4zM4 14h4v3H4zM10 14h4v3h-4zM4 19h4v3H4zM10 19h4v3h-4zM16 9h4v3h-4z" fill="#e6f0f6" />
            <path d="M16 14h4v8h-4z" fill="#27548f" />
        </Svg>
    ) },
    { key: 'acbr', icon: <AppIcon w={17} />, open: true, active: true },
];

const RemoteTaskbar = () => (
    <footer className="flex h-8 shrink-0 items-stretch border-b border-[#3a3a3a] bg-[#1c1c1c] text-white">
        <button aria-label="Iniciar" className="flex w-[38px] items-center justify-center"><WindowsIcon w={13} /></button>
        {remoteApps.map((app) => (
            <button key={app.key} aria-label={app.key} className={`flex w-[37px] flex-col items-center ${app.active ? 'bg-[#4a4a4a]' : ''}`}>
                <span className="flex flex-1 items-center">{app.icon}</span>
                <span className={`h-px ${app.active ? 'w-full' : 'w-[30px]'} ${app.open ? 'bg-[#8cb9d8]' : ''}`}></span>
                <span className="h-[2px]"></span>
            </button>
        ))}
        <div className="flex flex-1 items-center justify-end gap-[7px]">
            <ChevronUp size={12} />
            <Svg w={12}>
                <path d="M7 0l6 2v5c0 4-3 6-6 8-3-2-6-4-6-8V2z" fill="#fff" />
                <path d="M7 0v15M1 7h12" stroke="#1c1c1c" />
                <circle cx="11.500" cy="11.500" r="4.500" fill="#1fa34a" />
                <path d="M9.500 11.500l1.500 1.500 2.500-3" stroke="#fff" strokeWidth="1.200" />
            </Svg>
            <Svg w={13}>
                <path d="M5 3h10v8H5zM7 14h6M10 11v3M1 1h4v5H1zM3 6v5h2" stroke="#eee" strokeWidth="1.200" />
            </Svg>
            <div className="flex items-center pr-[3px]">
                <div className="w-[46px] text-center text-[9px] leading-[14px]">13:10<br />02/07/2020</div>
                <button aria-label="Notificações" className="flex h-[30px] w-[41px] items-center justify-center border-r border-[#777]">
                    <Svg w={14}>
                        <path d="M1 2h13v10H9l-3 3v-3H1z" stroke="#eee" strokeWidth="1.200" />
                        <circle cx="12.500" cy="12" r="3" fill="#fff" />
                    </Svg>
                </button>
            </div>
        </div>
    </footer>
);

const SideHandle = () => (
    <div className="absolute top-[423px] right-0">
        <Svg w={19} h={41} box="0 0 19 41">
            <path d="M0 4q0-4 4-4h15v41L0 28z" fill="#5a5c5f" />
            <path d="M2 5h16v16H2z" fill="#2b4d72" />
            <circle cx="10" cy="13" r="7" fill="#8b97a5" />
            <path d="M4 13l4-3v2h4v-2l4 3-4 3v-2H8v2z" fill="#2b4d72" />
        </Svg>
    </div>
);

const RemoteSession = () => (
    <main className="relative z-10 mb-2 flex min-w-0 flex-1 flex-col">
        <SessionBar />
        <div className="relative flex flex-1 flex-col">
            <Explorer />
            <RemoteTaskbar />
            <AcbrWindow />
            <FloatingTools />
            <Toast />
            <SideHandle />
        </div>
    </main>
);

/* ---------- host taskbar ---------- */

const hostApps = [
    { key: 'notepad', open: true, icon: (
        <Svg w={24} box="0 0 24 24">
            <path d="M8 2l14 2-3 17-15-2z" fill="#7fb9c9" />
            <path d="M8 2l14 2-6 8-9 2z" fill="#c9e6ee" />
            <path d="M4 19l15 2 .5-3-14.500-2z" fill="#e9eef0" />
            <path d="M8 2l14 2" stroke="#5f7e88" strokeWidth="2" strokeDasharray="1 1" />
        </Svg>
    ) },
    { key: 'explorer', icon: <ExplorerIcon w={23} /> },
    { key: 'whatsapp', open: true, badge: 1, icon: (
        <Svg w={26} box="0 0 28 28">
            <path d="M2 26l2-7A11.500 11.500 0 1 1 9 24z" fill="#fff" />
            <circle cx="14" cy="13.500" r="9.500" fill="#2fb843" />
            <path d="M9 9c1-1 2-1 2.500 1s-1 2 0 3.500 2 2 3 2.500 1.500-2 3-1 1 2 0 3c-4 2-10-4-8.500-9z" fill="#fff" />
        </Svg>
    ) },
    { key: 'thunderbird', open: true, icon: (
        <Svg w={25} box="0 0 24 24">
            <circle cx="12.500" cy="12" r="11" fill="#2a69b5" />
            <path d="M2 6c4-6 15-6 19 1-6-4-12-1-19-1z" fill="#6db0ea" />
            <path d="M1 12l3-3 10 1 4 5-3 6c-6 1-11-1-13-4z" fill="#f1f3f6" />
            <path d="M3 11l7 4 5-3" stroke="#a9b6c6" />
            <path d="M15 8c4 1 7 4 5 10-1-4-2-7-5-10z" fill="#1d4f94" />
        </Svg>
    ) },
    { key: 'chrome', open: true, icon: <ChromeIcon w={24} /> },
    { key: 'rdp', open: true, icon: <RemoteDesktopIcon w={24} /> },
    { key: 'virtualbox', open: true, icon: (
        <Svg w={24} box="0 0 24 24">
            <path d="M12 1l9 4v12l-9 6-9-6V5z" fill="#e9eef4" />
            <path d="M12 3l6.500 3L12 9.500 5.500 6z" fill="#1b3c66" />
            <path d="M4.500 8l6.500 3.500v8.500l-6.500-4zM19.500 8L13 11.500V20l6.500-4z" fill="#1b3c66" />
        </Svg>
    ) },
    { key: 'ib', open: true, icon: (
        <Svg w={24} box="0 0 24 24">
            {[[8, 4], [16, 4], [3, 12], [21, 12], [16, 20]].map(([x, y]) => (
                <circle key={`${x}-${y}`} cx={x} cy={y} r="2.600" fill="#4fb552" />
            ))}
            <rect x="7" y="9" width="10" height="6" fill="#e6e6e6" />
            <path d="M9 10v4M11.500 10v4M11.500 10.500h3v3h-3" stroke="#222" strokeWidth="1.200" />
        </Svg>
    ) },
    { key: 'teamviewer', open: true, icon: <TeamViewerIcon w={24} /> },
];

const HostTaskbar = () => (
    <footer className="flex h-10 shrink-0 items-stretch bg-[#1e1e1e] text-white">
        <button aria-label="Iniciar" className="flex w-12 items-center justify-center"><WindowsIcon w={17} /></button>
        <button aria-label="Pesquisar" className="flex w-12 items-center justify-center">
            <Svg w={17}>
                <circle cx="10" cy="6" r="4.800" stroke="#fff" strokeWidth="1.300" />
                <path d="M6.500 9.500L1 15" stroke="#fff" strokeWidth="1.300" />
            </Svg>
        </button>
        <button aria-label="Cortana" className="flex w-12 items-center justify-center">
            <Svg w={16}><circle cx="8" cy="8" r="6.700" stroke="#fff" strokeWidth="2" /></Svg>
        </button>
        <div className="flex pl-[2px]">
            {hostApps.map((app) => (
                <button key={app.key} aria-label={app.key} className="flex w-[49px] flex-col items-center">
                    <span className="relative flex flex-1 items-center">
                        {app.icon}
                        {app.badge && <span className="absolute -right-[2px] bottom-1 flex h-[15px] w-[15px] items-center justify-center rounded-full bg-[#e51b23] text-[11px] leading-[15px]">{app.badge}</span>}
                    </span>
                    <span className={`h-[2px] w-10 ${app.open ? 'bg-[#76b9ed]' : ''}`}></span>
                </button>
            ))}
        </div>
        <div className="flex flex-1 items-center justify-end gap-2">
            <ChevronUp size={16} strokeWidth={1.8} />
            <Svg w={17}>
                <path d="M4 13a3.500 3.500 0 0 1-.5-6.500 4.500 4.500 0 0 1 8-1.500A4 4 0 0 1 12.500 13z" fill="#c9c9c9" />
                <path d="M4 13a3 3 0 0 1 0-5c3-1 5 1 6 1s5-2 6 1-2 3-3.500 3z" fill="#fff" />
            </Svg>
            <Svg w={15}>
                <path d="M1 14A13 13 0 0 1 14 2M4.500 14A9.500 9.500 0 0 1 14 5.500M8 14A6 6 0 0 1 14 9" stroke="#eee" strokeWidth="1.300" />
                <circle cx="12.500" cy="13" r="2" fill="#fff" />
            </Svg>
            <Svg w={17}>
                <path d="M1 6h3l4-4v12l-4-4H1z" stroke="#fff" strokeWidth="1.200" />
                <path d="M10 6q1.500 2 0 4M12 4q3 4 0 8M14 2.500q4 5.500 0 11" stroke="#fff" />
            </Svg>
            <div className="flex h-full items-center border-r border-[#777]">
                <div className="w-[68px] text-center text-[11px] leading-[18px]">13:10<br />02/07/2020</div>
            </div>
            <span className="-ml-1"></span>
        </div>
    </footer>
);

const App = () => {
    return (
        <div className="flex h-screen flex-col overflow-hidden bg-black font-['Open_Sans',sans-serif]">
            <div className="flex min-h-0 flex-1">
                <DesktopIcons />
                <RemoteSession />
                {/* wallpaper wordmark, mostly covered by the session */}
                <aside className="flex w-[74px] shrink-0 items-end justify-end pr-[41px] pb-[9px] font-['Roboto'] text-[48px] leading-[48px] font-bold text-[#1c9fd2]">ão</aside>
            </div>
            <HostTaskbar />
        </div>
    );
};

export default App;
